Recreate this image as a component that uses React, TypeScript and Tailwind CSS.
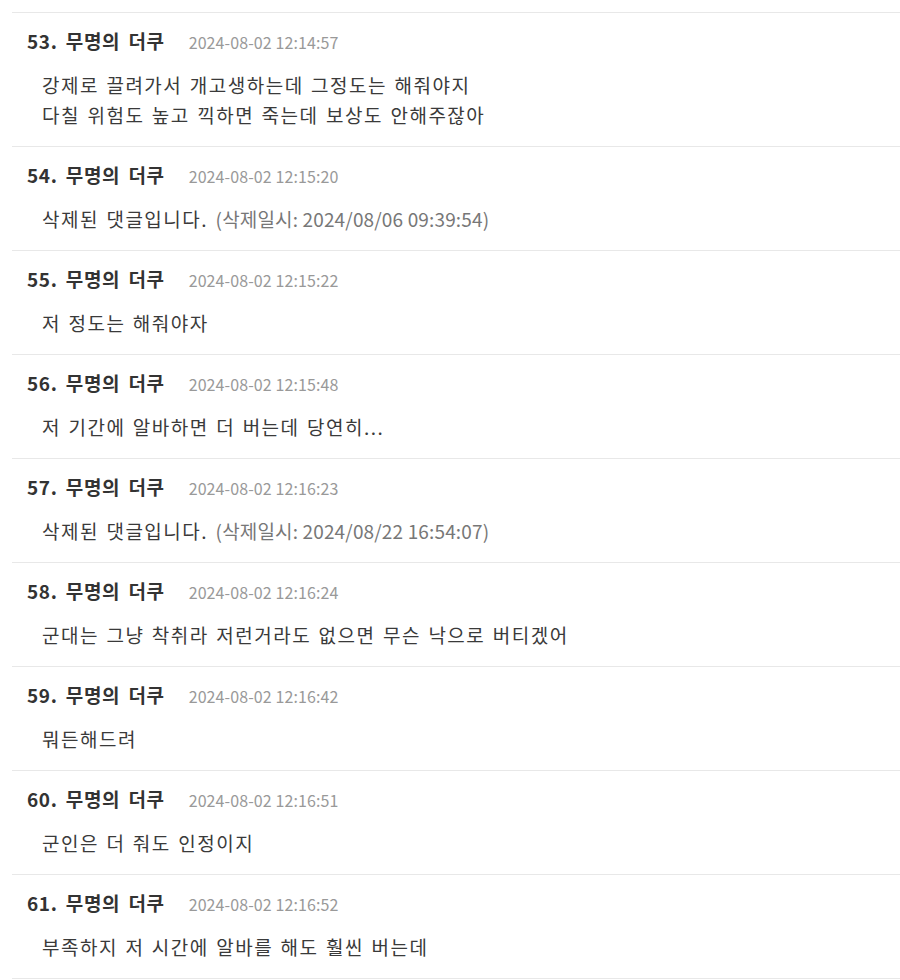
import React from 'react'

type Comment = {
  no: number
  author: string
  time: string
  lines?: string[]
  deletedAt?: string
}

const comments: Comment[] = [
  {
    no: 53,
    author: '무명의 더쿠',
    time: '2024-08-02 12:14:57',
    lines: ['강제로 끌려가서 개고생하는데 그정도는 해줘야지', '다칠 위험도 높고 끽하면 죽는데 보상도 안해주잖아'],
  },
  { no: 54, author: '무명의 더쿠', time: '2024-08-02 12:15:20', deletedAt: '2024/08/06 09:39:54' },
  { no: 55, author: '무명의 더쿠', time: '2024-08-02 12:15:22', lines: ['저 정도는 해줘야자'] },
  { no: 56, author: '무명의 더쿠', time: '2024-08-02 12:15:48', lines: ['저 기간에 알바하면 더 버는데 당연히...'] },
  { no: 57, author: '무명의 더쿠', time: '2024-08-02 12:16:23', deletedAt: '2024/08/22 16:54:07' },
  { no: 58, author: '무명의 더쿠', time: '2024-08-02 12:16:24', lines: ['군대는 그냥 착취라 저런거라도 없으면 무슨 낙으로 버티겠어'] },
  { no: 59, author: '무명의 더쿠', time: '2024-08-02 12:16:42', lines: ['뭐든해드려'] },
  { no: 60, author: '무명의 더쿠', time: '2024-08-02 12:16:51', lines: ['군인은 더 줘도 인정이지'] },
  { no: 61, author: '무명의 더쿠', time: '2024-08-02 12:16:52', lines: ['부족하지 저 시간에 알바를 해도 훨씬 버는데'] },
]

const font = { fontFamily: '"Noto Sans CJK KR", "Noto Sans", sans-serif' }

function CommentItem({ c }: { c: Comment }) {
  return (
    <li className="border-b border-[#e8e8e8] pl-[15px] pt-[14px] pb-[16px]">
      <div className="flex items-baseline h-[28px]">
        <span className="text-[19px] font-bold text-[#333] tracking-[0.6px] [word-spacing:3.5px]">
          {c.no}. {c.author}
        </span>
        <span className="ml-[24px] text-[16px] text-[#999] tracking-[0.1px]">{c.time}</span>
      </div>
      <div className="pl-[15px] pt-[15px] text-[19px] text-[#3a3a3a] leading-[30px] tracking-[1.5px] [word-spacing:1.7px]">
        {c.deletedAt ? (
          <p>
            삭제된 댓글입니다.{' '}
            <span className="text-[#777] tracking-[0.15px] [word-spacing:0px]">(삭제일시: {c.deletedAt})</span>
          </p>
        ) : (
          c.lines!.map((l, i) => <p key={i}>{l}</p>)
        )}
      </div>
    </li>
  )
}

export default function App() {
  return (
    <div className="bg-white w-[900px] h-[980px] overflow-hidden pl-[12px]" style={font}>
      <ul className="border-t border-[#e8e8e8] mt-[12px]">
        {comments.map(c => (
          <CommentItem key={c.no} c={c} />
        ))}
      </ul>
    </div>
  )
}
